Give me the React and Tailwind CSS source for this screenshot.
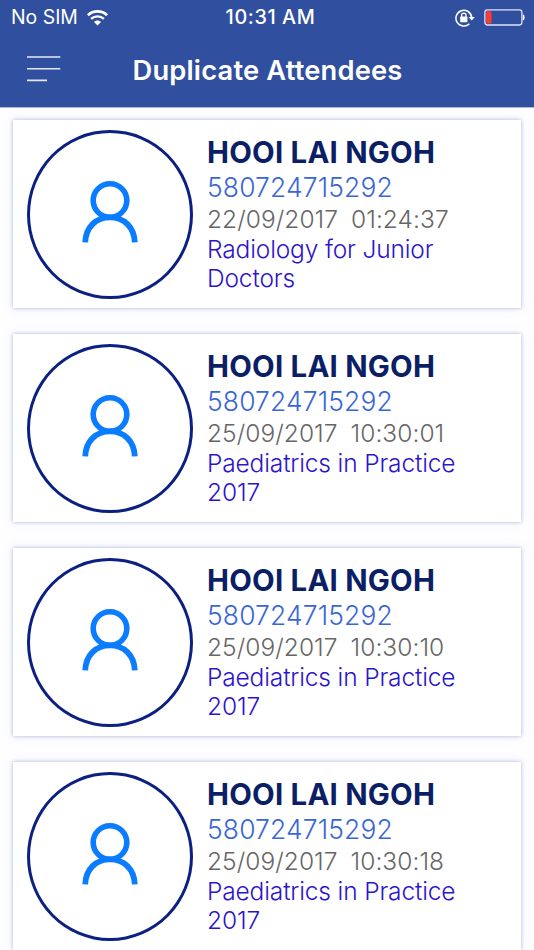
import React from "react";

const attendees = [
  {
    name: "HOOI LAI NGOH",
    id: "580724715292",
    date: "22/09/2017",
    time: "01:24:37",
    event: "Radiology for Junior Doctors",
  },
  {
    name: "HOOI LAI NGOH",
    id: "580724715292",
    date: "25/09/2017",
    time: "10:30:01",
    event: "Paediatrics in Practice 2017",
  },
  {
    name: "HOOI LAI NGOH",
    id: "580724715292",
    date: "25/09/2017",
    time: "10:30:10",
    event: "Paediatrics in Practice 2017",
  },
  {
    name: "HOOI LAI NGOH",
    id: "580724715292",
    date: "25/09/2017",
    time: "10:30:18",
    event: "Paediatrics in Practice 2017",
  },
];

const WifiIcon = () => (
  <svg width="21" height="16" viewBox="0 0 21 16" fill="none">
    <path
      d="M.9 5.2C6.2 .1 14.8 .1 20.1 5.2"
      stroke="white"
      strokeWidth="2.6"
    />
    <path
      d="M4.1 8.8C7.7 5.5 13.3 5.5 16.9 8.8"
      stroke="white"
      strokeWidth="2.4"
    />
    <path d="M7 12.1C9 10.1 12 10.1 14 12.1L10.5 15.6Z" fill="white" />
  </svg>
);

const RotationLockIcon = () => (
  <svg width="20" height="18" viewBox="0 0 20 18" fill="none">
    <path
      d="M16.7 8.3A7.9 7.9 0 1 0 14.4 14.8"
      stroke="white"
      strokeWidth="1.5"
    />
    <path d="M13.6 7.9H19.8L16.7 11.4Z" fill="white" />
    <rect x="5.2" y="7.6" width="7.2" height="5.6" rx="0.6" fill="white" />
    <path
      d="M6.6 8V6.3a2.2 2.2 0 0 1 4.4 0V8"
      stroke="white"
      strokeWidth="1.3"
    />
  </svg>
);

const BatteryIcon = () => (
  <svg width="42" height="17" viewBox="0 0 42 17" fill="none">
    <rect
      x="0.9"
      y="0.8"
      width="37"
      height="15.2"
      rx="2.4"
      stroke="#dfe3fa"
      strokeWidth="1.3"
    />
    <rect x="2.2" y="2.2" width="5.3" height="12.4" rx="0.8" fill="#ff3b30" />
    <path d="M38.8 5.6h.6q1.2.4 1.2 2.8t-1.2 2.8h-.6z" fill="white" />
  </svg>
);

const PersonIcon = () => (
  <svg width="60" height="66" viewBox="0 0 60 66" fill="none">
    <circle cx="30" cy="21.5" r="16.8" stroke="#0a7cff" strokeWidth="5.6" />
    <path
      d="M5.2 63.4C5.8 48 16 38.4 30 38.4S54.2 48 54.8 63.4"
      stroke="#0a7cff"
      strokeWidth="5.8"
    />
  </svg>
);

const Header = () => (
  <header className="h-[107px] bg-[#304f9e] text-white shadow-[0_1px_0_#a9b7db]">
    <div className="grid h-[35px] grid-cols-3 items-center pr-2 pl-[11px]">
      <div className="flex items-center gap-[9px]">
        <span className="text-[19.4px] leading-none font-normal">No SIM</span>
        <WifiIcon />
      </div>
      <span className="pl-[4px] text-center text-[19.8px] leading-none font-medium tracking-[0.6px]">
        10:31 AM
      </span>
      <div className="flex items-center justify-end gap-[9px]">
        <RotationLockIcon />
        <BatteryIcon />
      </div>
    </div>

    <div className="grid h-[72px] grid-cols-[60px_1fr_60px] items-center pl-[27px] pr-[27px]">
      <svg
        width="34"
        height="26"
        viewBox="0 0 34 26"
        stroke="#e4e9f8"
        strokeWidth="1.6"
        className="mb-[5px]"
      >
        <path d="M0 1H33.3M0 12.8H33.3M0 24.4H20" />
      </svg>
      <h1 className="pl-px text-center text-[27.3px] leading-none font-semibold tracking-[0.18px] whitespace-nowrap">
        Duplicate Attendees
      </h1>
    </div>
  </header>
);

const AttendeeCard = ({ attendee }) => (
  <article className="flex h-[188px] shrink-0 bg-white pt-[10px] pl-[14px] shadow-[0_0_4px_rgba(60,75,160,0.4),0_0_12px_rgba(90,100,240,0.07)]">
    <div className="flex h-[169px] w-[166px] shrink-0 items-center justify-center rounded-[50%] border-[3px] border-[#0b2080] pb-[5px]">
      <PersonIcon />
    </div>
    <div className="ml-[14px] w-[270px] pt-[5px] font-light">
      <h2 className="text-[29.4px] leading-[36px] font-bold tracking-[0.22px] whitespace-nowrap text-[#0b1f66]">
        {attendee.name}
      </h2>
      <p className="text-[26.4px] leading-[32px] font-[350] tracking-[0.17px] text-[#3a66d6]">
        {attendee.id}
      </p>
      <p className="flex gap-[13px] text-[24.5px] leading-[32px] tracking-[0.05px] whitespace-nowrap text-[#666666]">
        <span>{attendee.date}</span>
        <span>{attendee.time}</span>
      </p>
      <p className="text-[24.5px] leading-[29px] tracking-[-0.14px] text-[#2c14cc]">
        {attendee.event}
      </p>
    </div>
  </article>
);

const App = () => {
  return (
    <div className="flex h-[950px] w-[534px] flex-col overflow-hidden bg-[#fefeff] font-['Inter','Liberation_Sans',sans-serif]">
      <Header />
      <main className="flex min-h-0 flex-1 flex-col gap-[26px] overflow-hidden px-[13px] pt-[13px]">
        {attendees.map((attendee) => (
          <AttendeeCard key={attendee.time} attendee={attendee} />
        ))}
      </main>
    </div>
  );
};

export default App;
